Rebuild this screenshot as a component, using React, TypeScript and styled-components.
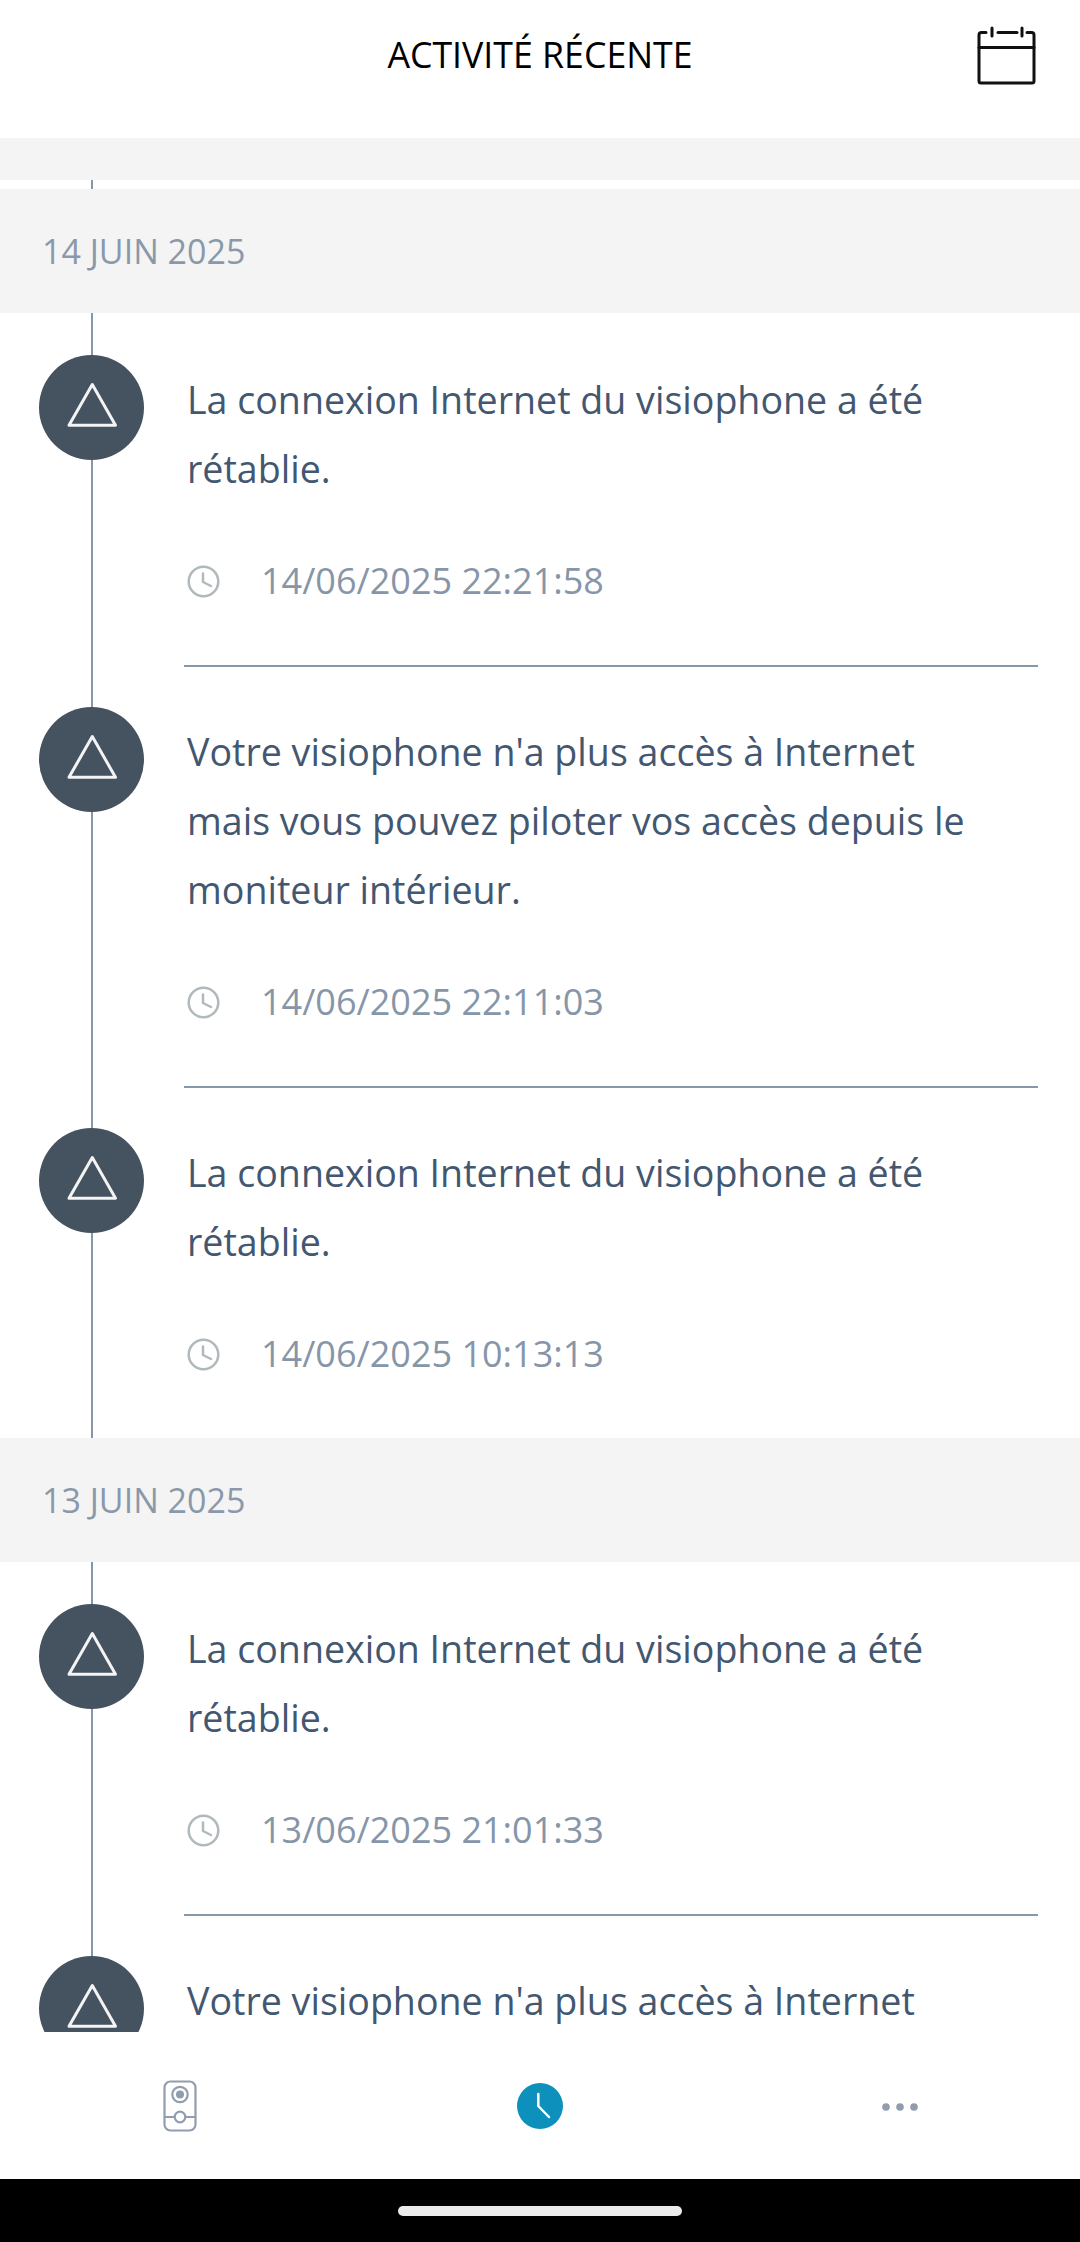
import React from 'react';
import styled, { createGlobalStyle } from 'styled-components';

const GlobalStyle = createGlobalStyle`
  html, body {
    margin: 0;
    padding: 0;
    background: #fff;
  }
  * {
    box-sizing: border-box;
  }
`;

const Screen = styled.div`
  width: 1080px;
  height: 2242px;
  display: flex;
  flex-direction: column;
  background: #fff;
  font-family: 'Open Sans', 'Liberation Sans', sans-serif;
  overflow: hidden;
`;

const Header = styled.header`
  height: 138px;
  flex: none;
  display: grid;
  grid-template-columns: 1fr auto;
  align-items: start;
`;

const Title = styled.h1`
  margin: 0;
  padding-top: 29px;
  font-size: 35.7px;
  line-height: 50px;
  font-weight: 400;
  color: #000;
  text-align: center;
  grid-column: 1 / 3;
  grid-row: 1;
`;

const CalendarButton = styled.div`
  grid-column: 2;
  grid-row: 1;
  padding: 26px 44px 0 0;
  display: flex;
`;

const TopStrip = styled.div`
  height: 42px;
  flex: none;
  background: #f4f4f4;
`;

const Feed = styled.main`
  flex: 1;
  min-height: 0;
  overflow: hidden;
`;

const Rail = styled.div`
  position: relative;
  &::before {
    content: '';
    position: absolute;
    left: 91px;
    top: 0;
    bottom: 0;
    width: 2px;
    background: #8598aa;
  }
`;

const Sliver = styled(Rail)`
  height: 9px;
`;

const DateBand = styled.div`
  height: 124px;
  padding-left: 42px;
  display: flex;
  align-items: center;
  background: #f4f4f4;
  color: #8a99aa;
  font-size: 34px;
`;

const Item = styled(Rail)`
  display: grid;
  grid-template-columns: 184px 1fr;
  padding-top: 42px;
`;

const Bubble = styled.div`
  position: relative;
  z-index: 1;
  width: 105px;
  height: 105px;
  margin-left: 39px;
  border-radius: 50%;
  background: #45525f;
`;

const Body = styled.div<{ $last: boolean }>`
  margin: 0 42px -2px 0;
  padding: 10px 0 59px 3px;
  border-bottom: 2px solid ${props => (props.$last ? 'transparent' : '#8798a9')};
`;

const Message = styled.p`
  margin: 0;
  max-width: 790px;
  font-size: 37.6px;
  line-height: 69px;
  color: #435770;
`;

const Stamp = styled.div`
  margin-top: 53px;
  display: flex;
  align-items: center;
  gap: 41px;
  font-size: 36px;
  line-height: 50px;
  color: #8696a8;
`;

const TabBar = styled.nav`
  height: 147px;
  flex: none;
  display: grid;
  grid-template-columns: repeat(3, 1fr);
  align-items: center;
  justify-items: center;
  background: #fff;
`;

const TabIcon = styled.div<{ $drop?: number }>`
  display: flex;
  padding-top: ${props => props.$drop ?? 0}px;
`;

const HomeBar = styled.div`
  height: 63px;
  flex: none;
  display: flex;
  align-items: center;
  justify-content: center;
  background: #000;
`;

const HomePill = styled.div`
  width: 284px;
  height: 10px;
  border-radius: 5px;
  background: #ebebeb;
`;

const CalendarIcon = () => (
  <svg width="59" height="59" viewBox="0 0 59 59" fill="none" stroke="#111" strokeWidth="3" strokeLinecap="round">
    <path d="M9 6.5H4.5Q2 6.5 2 9V55Q2 57 4 57H55Q57 57 57 55V9Q57 6.5 54.500 6.500H50" />
    <path d="M2 21.500H57" />
    <path d="M15 2V10M45 2V10" />
    <path d="M21 6.500H40" />
  </svg>
);

const AlertIcon = () => (
  <svg width="105" height="105" viewBox="0 0 105 105" fill="none" stroke="#f4f4f4" strokeWidth="3" strokeLinejoin="round">
    <path d="M53.300 29.500L76.500 70.300H30Z" />
  </svg>
);

const ClockSmall = () => (
  <svg width="33" height="33" viewBox="0 0 33 33" fill="none" stroke="#b0b9bc" strokeWidth="2.500" strokeLinecap="round" strokeLinejoin="round">
    <circle cx="16.500" cy="16.500" r="14.800" />
    <path d="M16 8.500V17L24 21" />
  </svg>
);

const DoorIcon = () => (
  <svg width="34" height="52" viewBox="0 0 34 52" fill="none" stroke="#8f9dae" strokeWidth="2.200">
    <rect x="1.500" y="1.500" width="31" height="49" rx="6" />
    <circle cx="17" cy="14.500" r="7.700" />
    <circle cx="17" cy="14.500" r="4" fill="#8f9dae" stroke="none" />
    <circle cx="17" cy="37" r="5.300" />
    <path d="M1.500 37H11.700M22.300 37H32.500" />
  </svg>
);

const ClockActive = () => (
  <svg width="46" height="46" viewBox="0 0 46 46">
    <circle cx="23" cy="23" r="23" fill="#0e90bd" />
    <path d="M21.300 11V23L32 34" fill="none" stroke="#fff" strokeWidth="2.500" strokeLinecap="round" strokeLinejoin="round" />
  </svg>
);

const DotsIcon = () => (
  <svg width="36" height="8" viewBox="0 0 36 8" fill="#8f9dae">
    <circle cx="4" cy="4" r="3.800" />
    <circle cx="18" cy="4" r="3.800" />
    <circle cx="32" cy="4" r="3.800" />
  </svg>
);

const RESTORED = 'La connexion Internet du visiophone a été rétablie.';
const LOST = "Votre visiophone n'a plus accès à Internet mais vous pouvez piloter vos accès depuis le moniteur intérieur.";

const days = [
  {
    label: '14 JUIN 2025',
    events: [
      { text: RESTORED, time: '14/06/2025 22:21:58' },
      { text: LOST, time: '14/06/2025 22:11:03' },
      { text: RESTORED, time: '14/06/2025 10:13:13' },
    ],
  },
  {
    label: '13 JUIN 2025',
    events: [
      { text: RESTORED, time: '13/06/2025 21:01:33' },
      { text: LOST, time: '13/06/2025 20:50:12' },
    ],
  },
];

const App: React.FC = () => (
  <Screen>
    <GlobalStyle />
    <Header>
      <Title>ACTIVITÉ RÉCENTE</Title>
      <CalendarButton>
        <CalendarIcon />
      </CalendarButton>
    </Header>
    <TopStrip />
    <Feed>
      <Sliver />
      {days.map(day => (
        <section key={day.label}>
          <DateBand>{day.label}</DateBand>
          {day.events.map((event, i) => (
            <Item key={event.time}>
              <Bubble>
                <AlertIcon />
              </Bubble>
              <Body $last={i === day.events.length - 1}>
                <Message>{event.text}</Message>
                <Stamp>
                  <ClockSmall />
                  {event.time}
                </Stamp>
              </Body>
            </Item>
          ))}
        </section>
      ))}
    </Feed>
    <TabBar>
      <TabIcon>
        <DoorIcon />
      </TabIcon>
      <TabIcon>
        <ClockActive />
      </TabIcon>
      <TabIcon $drop={3}>
        <DotsIcon />
      </TabIcon>
    </TabBar>
    <HomeBar>
      <HomePill />
    </HomeBar>
  </Screen>
);

export default App;
